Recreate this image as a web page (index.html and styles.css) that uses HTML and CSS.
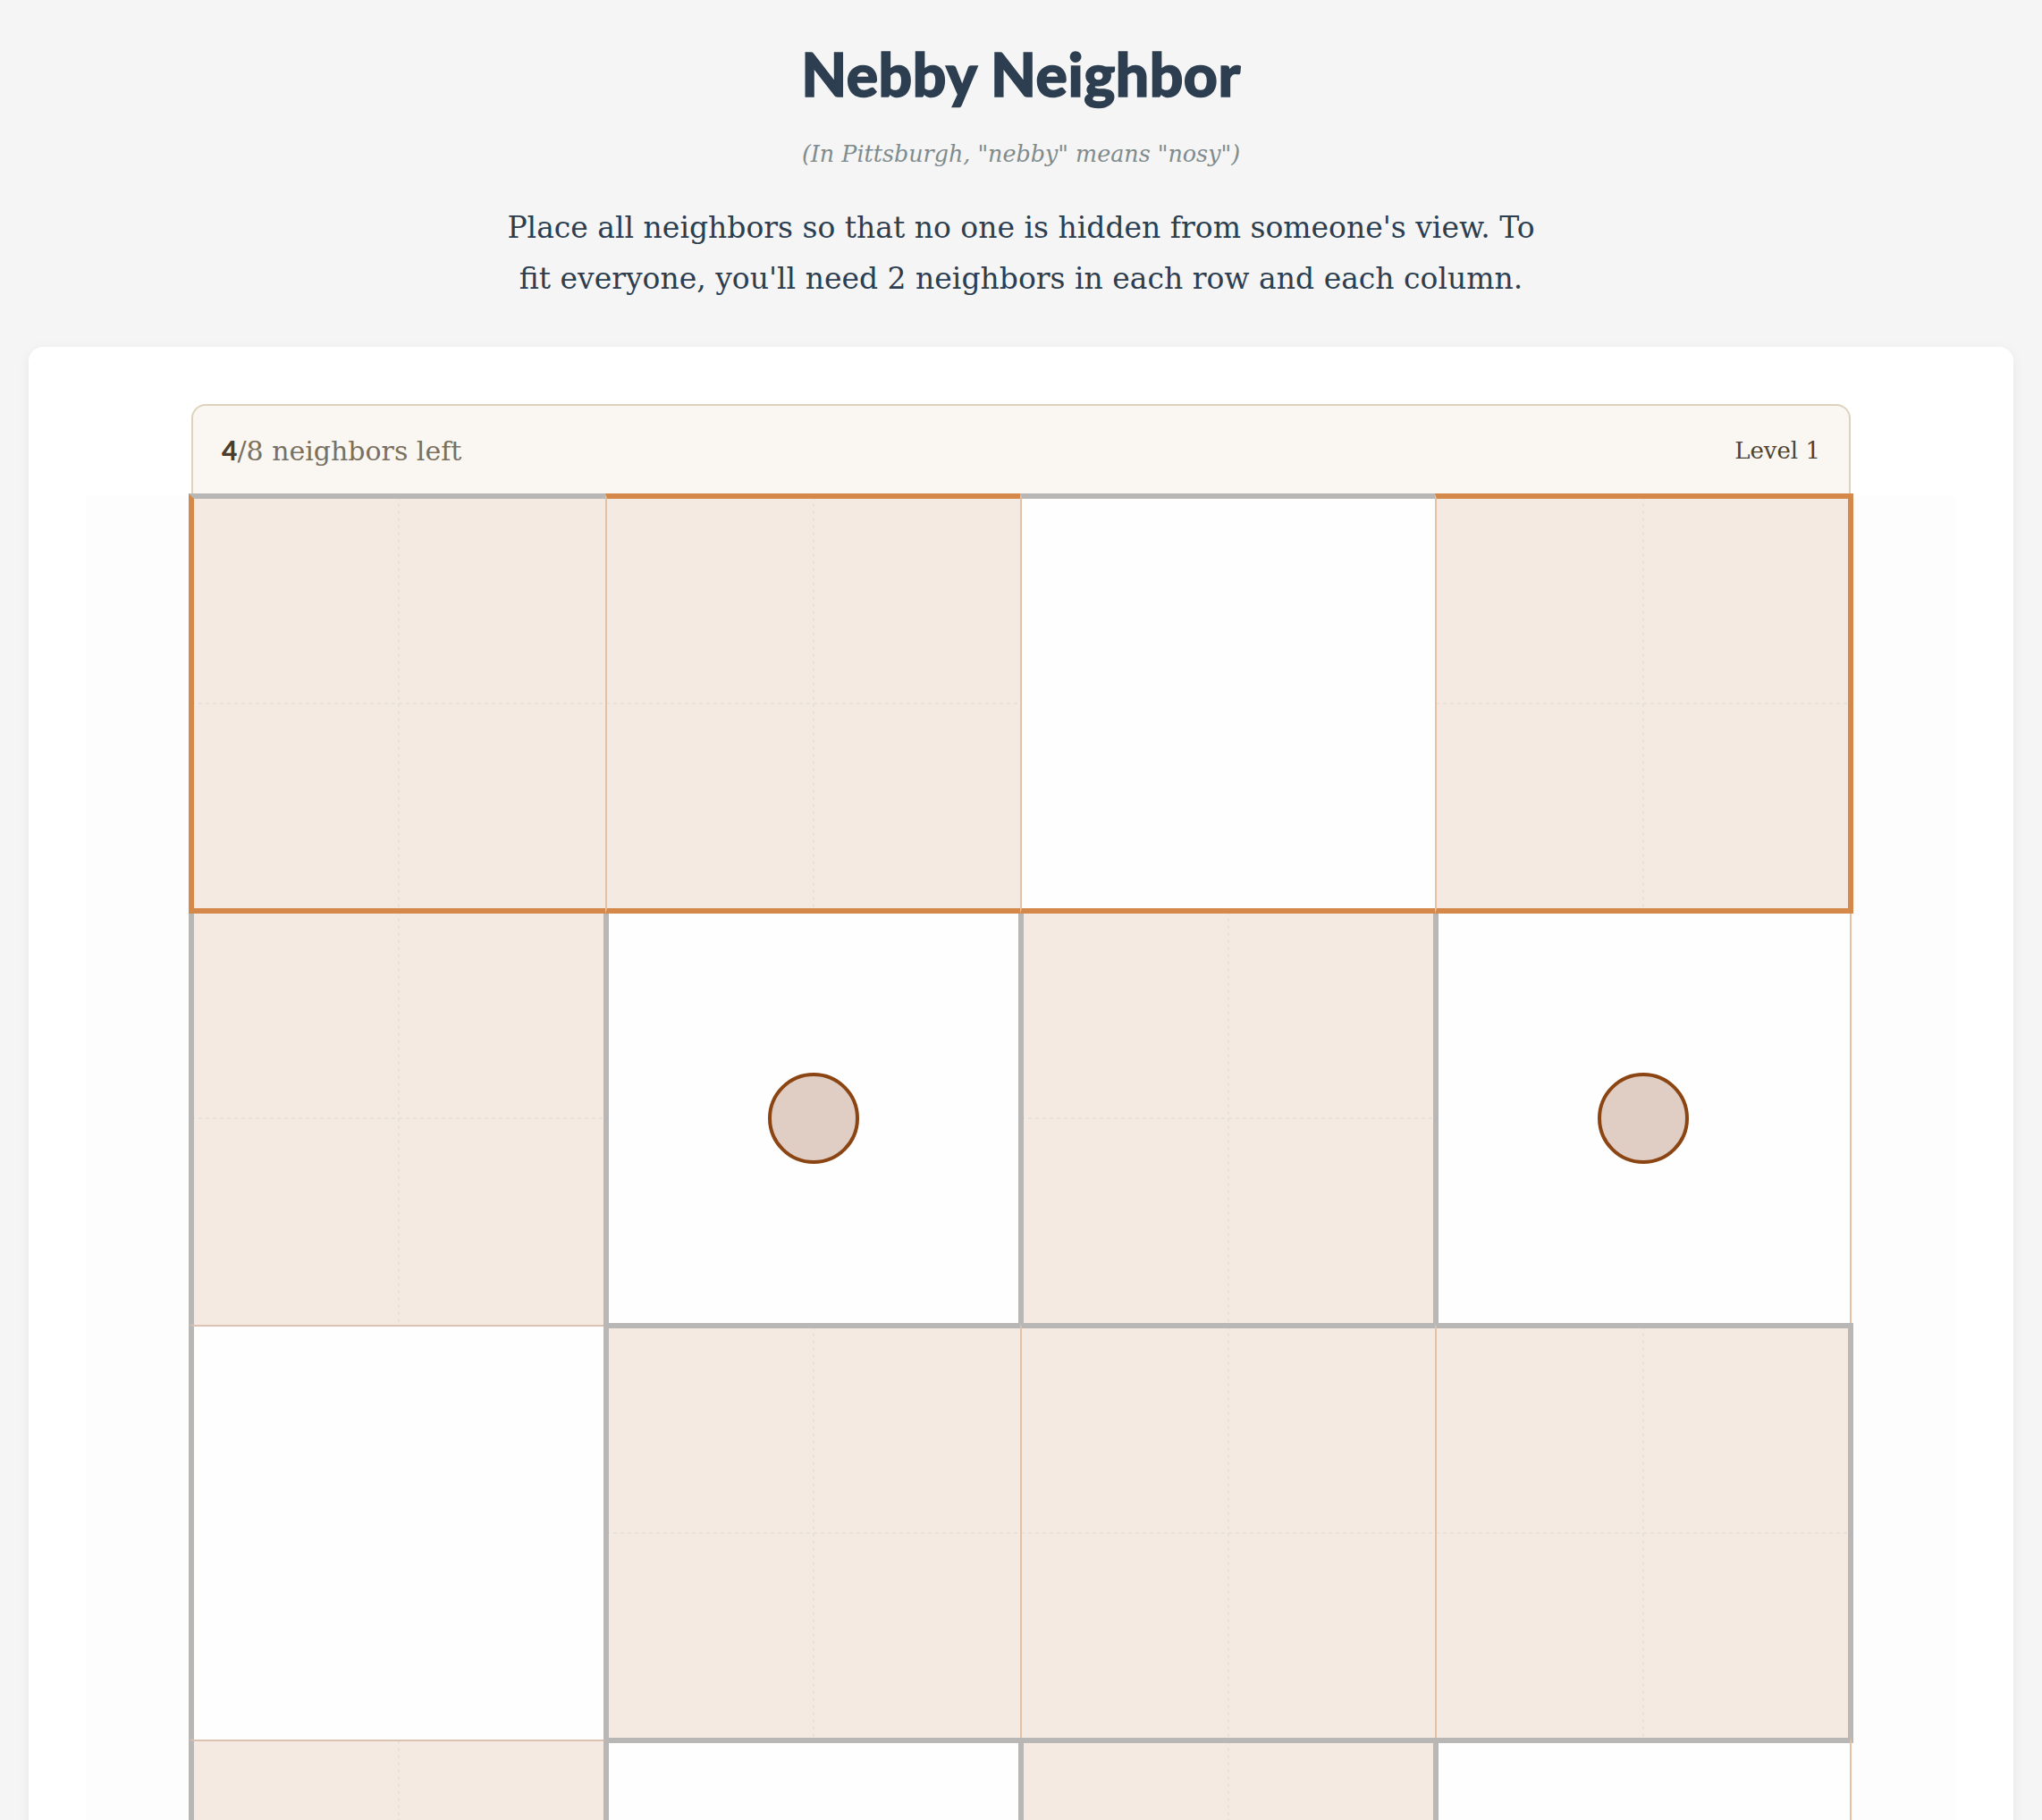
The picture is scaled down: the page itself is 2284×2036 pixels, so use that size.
FILE: index.html
```html
<!DOCTYPE html>
<html lang="en">
<head>
<meta charset="utf-8">
<title>Nebby Neighbor</title>
<link rel="stylesheet" href="styles.css">
</head>
<body>
<div class="page">
  <header class="intro">
    <h1 class="title">Nebby Neighbor</h1>
    <p class="subtitle">(In Pittsburgh, "nebby" means "nosy")</p>
    <p class="rules">Place all neighbors so that no one is hidden from someone's view. To<br>fit everyone, you'll need 2 neighbors in each row and each column.</p>
  </header>
  <main class="card">
    <div class="status">
      <span class="count"><b class="count-num">4</b>/8 neighbors left</span>
      <span class="level">Level 1</span>
    </div>
    <div class="board-wrap">
      <div class="board">
        <div class="cell beige hl tK rN bO lO"></div>
        <div class="cell beige hl tO rN bO lN"></div>
        <div class="cell white hl tK rN bO lN"></div>
        <div class="cell beige hl tO rO bO lN"></div>

        <div class="cell beige tO rK bN lK"></div>
        <div class="cell white tO rK bK lK"><span class="neighbor"></span></div>
        <div class="cell beige tO rK bK lK"></div>
        <div class="cell white tO rN bK lK"><span class="neighbor"></span></div>

        <div class="cell white tN rK bN lK"></div>
        <div class="cell beige tK rN bK lK"></div>
        <div class="cell beige tK rN bK lN"></div>
        <div class="cell beige tK rK bK lN"></div>

        <div class="cell beige tN rK bN lK"></div>
        <div class="cell white tK rK bN lK"></div>
        <div class="cell beige tK rK bN lK"></div>
        <div class="cell white tK rN bN lK"></div>
      </div>
    </div>
  </main>
</div>
</body>
</html>
```

FILE: styles.css
```css
* { box-sizing: border-box; }

html, body {
  margin: 0;
  padding: 0;
}

body {
  background: #f5f5f5;
  font-family: "DejaVu Serif", "Liberation Serif", serif;
  color: #2c3e50;
}

.page {
  padding: 0 32px;
}

.intro {
  text-align: center;
}

.title {
  margin: 43px 0 0;
  font-family: "Lato", "DejaVu Sans", sans-serif;
  font-weight: 900;
  font-size: 66px;
  line-height: 1.2;
  color: #2c3e50;
  letter-spacing: 0.5px;
  -webkit-text-stroke: 1.5px #2c3e50;
}

.subtitle {
  margin: 32px 0 0;
  font-style: italic;
  font-size: 25.4px;
  line-height: 36px;
  color: #7f8c8d;
}

.rules {
  margin: 36px 0 0;
  font-size: 33px;
  line-height: 57px;
  color: #2c3e50;
}

.card {
  margin-top: 48px;
  background: #ffffff;
  border-radius: 16px;
  box-shadow: 0 3px 14px rgba(0, 0, 0, 0.06);
  padding: 64px 64px 200px;
}

.status {
  width: 1856px;
  height: 103px;
  margin: 0 auto;
  display: flex;
  align-items: center;
  justify-content: space-between;
  padding: 0 32px 2px 32px;
  background: #faf7f2;
  border: 2px solid #ddd2bc;
  border-bottom: none;
  border-radius: 16px 16px 0 0;
}

.count {
  font-size: 30px;
  color: #7a705f;
}

.count-num {
  font-family: "Lato", "DejaVu Sans", sans-serif;
  font-weight: 900;
  color: #4a3e2e;
}

.level {
  font-size: 26px;
  color: #4d4334;
}

.board-wrap {
  background: #fdfdfd;
  padding: 0 0 120px;
}

.board {
  width: 1856px;
  margin: 0 auto;
  display: grid;
  grid-template-columns: repeat(4, 464px);
  grid-auto-rows: 464px;
}

.cell {
  position: relative;
  display: flex;
  align-items: center;
  justify-content: center;
  --tw: 2px; --rw: 2px; --bw: 2px; --lw: 2px;
  --tc: #dec5b2; --rc: #dec5b2; --bc: #dec5b2; --lc: #dec5b2;
}

.cell.beige {
  background:
    repeating-linear-gradient(to bottom, #e7e1dc 0 4px, transparent 4px 8px) center / 2px 100% no-repeat,
    repeating-linear-gradient(to right, #e7e1dc 0 4px, transparent 4px 8px) center / 100% 2px no-repeat,
    #f4eae1;
}

.cell.white {
  background: #fefefe;
}

.cell::after {
  content: "";
  position: absolute;
  top: calc(var(--tw) / -2);
  right: calc(var(--rw) / -2);
  bottom: calc(var(--bw) / -2);
  left: calc(var(--lw) / -2);
  border-style: solid;
  border-width: var(--tw) var(--rw) var(--bw) var(--lw);
  border-color: var(--tc) var(--rc) var(--bc) var(--lc);
  pointer-events: none;
  z-index: 1;
}

.cell.hl::after { z-index: 2; }

.tK { --tw: 6px; --tc: #b9b7b5; }
.rK { --rw: 6px; --rc: #b9b7b5; }
.bK { --bw: 6px; --bc: #b9b7b5; }
.lK { --lw: 6px; --lc: #b9b7b5; }

.tN { --tw: 2px; --tc: #dcc3b1; }
.rN { --rw: 2px; --rc: #e3c2a6; }
.bN { --bw: 2px; --bc: #d3bfb0; }
.lN { --lw: 2px; --lc: #e3c2a6; }

.tO { --tw: 6px; --tc: #d4884a; }
.rO { --rw: 6px; --rc: #d4884a; }
.bO { --bw: 6px; --bc: #d4884a; }
.lO { --lw: 6px; --lc: #d4884a; }

.neighbor {
  width: 102px;
  height: 102px;
  border-radius: 50%;
  background: #e0cec4;
  border: 4.5px solid #8b4513;
}
```
